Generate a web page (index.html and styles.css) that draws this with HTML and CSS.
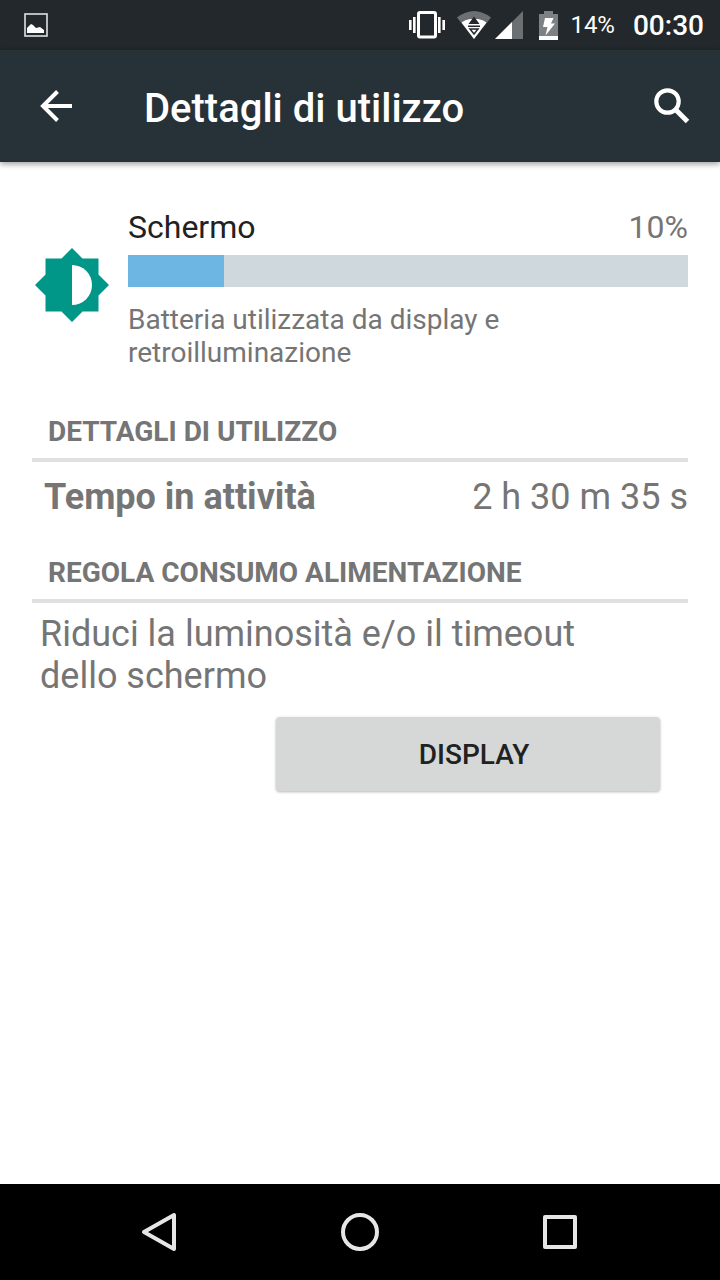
FILE: index.html
```html
<!DOCTYPE html>
<html lang="it">
  <head>
    <meta charset="UTF-8" />
    <meta name="viewport" content="width=device-width, initial-scale=1.0" />
    <title>Dettagli di utilizzo</title>
    <link rel="stylesheet" href="styles.css" />
  </head>
  <body>
    <div class="status">
      <svg class="status__picture" width="24" height="24" viewBox="0 0 24 24">
        <rect x="1" y="1" width="22" height="22" fill="none" stroke="#dce3e1" stroke-width="1.6" />
        <path d="M3 20v-5l4-4 2 1 3 3 4-1 4 3v3z" fill="#fff" />
      </svg>
      <svg class="status__vibrate" width="36" height="28" viewBox="0 0 36 28" fill="#fff">
        <rect x="9.5" y="1.5" width="17" height="24.5" rx="1.5" fill="none" stroke="#fff" stroke-width="3" />
        <path d="M0 9h2.6v10H0zM4 6h2.6v16H4zM29 6h2.6v16H29zM33.4 9H36v10h-2.6z" />
      </svg>
      <svg class="status__wifi" width="34" height="28" viewBox="0 0 34 28">
        <path d="M17 28L0 6.5Q17-6.500 34 6.5z" fill="#6c7072" />
        <path d="M17 28L4.500 11.500Q8 8.500 13 8h8Q26 8.500 29.500 11.500z" fill="#fff" />
        <path d="M17 5.500l5.500 7.500h-11z" fill="#22282b" />
        <path d="M11 15.200h12M13 18h8l-4 5z" fill="none" stroke="#22282b" stroke-width="1.500" />
      </svg>
      <svg class="status__signal" width="28" height="28" viewBox="0 0 28 28">
        <path d="M28 0v28H0z" fill="#6c7072" />
        <path d="M17 11v17H0z" fill="#fff" />
      </svg>
      <svg class="status__battery" width="19" height="29" viewBox="0 0 19 29">
        <path d="M5 0h9v3h5v26H0V3h5z" fill="#7d8183" />
        <path d="M0 25h19v4H0z" fill="#fff" />
        <path d="M6 7h8.500l-2.500 5.500h4L6.500 24.500 8.500 16H4z" fill="#fff" />
      </svg>
      <span class="status__percent">14%</span>
      <time class="status__time">00:30</time>
    </div>

    <header class="header">
      <button class="header__button" type="button" aria-label="Indietro">
        <svg width="32" height="32" viewBox="0 0 32 32" fill="none" stroke="#fff" stroke-width="4">
          <path d="M32 16H3M17.500 1.500L3 16l14.500 14.500" />
        </svg>
      </button>
      <h1 class="header__title">Dettagli di utilizzo</h1>
      <button class="header__button" type="button" aria-label="Cerca">
        <svg width="36" height="36" viewBox="0 0 36 36" fill="none" stroke="#fff">
          <circle cx="13.500" cy="13.500" r="11.200" stroke-width="4.200" />
          <path d="M22 22l11.500 11.500" stroke-width="5" />
        </svg>
      </button>
    </header>

    <main class="main">
      <section class="usage">
        <svg class="usage__icon" width="80" height="80" viewBox="0 0 80 80">
          <path d="M40 3l10.500 10.500H66.500V29.500L77 40 66.500 50.500V66.500H50.500L40 77 29.500 66.500H13.500V50.500L3 40l10.500-10.500V13.500H29.500z" fill="#009688" />
          <path d="M40 20a20 20 0 0 1 0 40z" fill="#fff" />
        </svg>
        <div class="usage__body">
          <div class="usage__row">
            <span class="usage__name">Schermo</span>
            <span class="usage__value">10%</span>
          </div>
          <div class="usage__bar">
            <div class="usage__fill"></div>
          </div>
          <p class="usage__text">Batteria utilizzata da display e retroilluminazione</p>
        </div>
      </section>

      <section class="block">
        <h2 class="block__title">DETTAGLI DI UTILIZZO</h2>
        <div class="block__row">
          <b>Tempo in attività</b>
          <span>2 h 30 m 35 s</span>
        </div>
      </section>

      <section class="block">
        <h2 class="block__title">REGOLA CONSUMO ALIMENTAZIONE</h2>
        <p class="block__text">Riduci la luminosità e/o il timeout dello schermo</p>
        <div class="block__actions">
          <button class="block__button" type="button">DISPLAY</button>
        </div>
      </section>
    </main>

    <nav class="nav">
      <button class="nav__button" type="button" aria-label="Indietro">
        <svg width="40" height="40" viewBox="0 0 40 40" fill="none" stroke="#e6e6e6" stroke-width="4" stroke-linejoin="round">
          <path d="M34 3v34L4 20z" />
        </svg>
      </button>
      <button class="nav__button" type="button" aria-label="Home">
        <svg width="40" height="40" viewBox="0 0 40 40" fill="none" stroke="#e6e6e6" stroke-width="4">
          <circle cx="20" cy="20" r="17" />
        </svg>
      </button>
      <button class="nav__button" type="button" aria-label="App recenti">
        <svg width="40" height="40" viewBox="0 0 40 40" fill="none" stroke="#e6e6e6" stroke-width="4" stroke-linejoin="round">
          <path d="M5 5h30v30H5z" />
        </svg>
      </button>
    </nav>
  </body>
</html>
```
FILE: styles.css
```css
* {
  box-sizing: border-box;
}
body {
  margin: 0;
  min-height: 100vh;
  display: flex;
  flex-direction: column;
  font-family: Roboto, sans-serif;
  color: #757575;
  background-color: #fff;
}
h1,
h2,
p {
  margin: 0;
}
svg {
  display: block;
  flex-shrink: 0;
}
button {
  font-family: inherit;
  border: none;
  cursor: pointer;
}

.status {
  display: flex;
  align-items: center;
  height: 50px;
  padding: 0 16px 0 24px;
  color: #fff;
  background-color: #22282b;
}
.status__vibrate {
  margin-left: auto;
}
.status__wifi {
  margin-left: 12px;
}
.status__signal {
  margin-left: 4px;
}
.status__battery {
  margin-left: 16px;
}
.status__percent {
  margin-left: 12px;
  font-size: 24px;
}
.status__time {
  margin-left: 18px;
  font-size: 28px;
  font-weight: 500;
}

.header {
  position: relative;
  display: flex;
  align-items: center;
  height: 112px;
  padding: 0 8px 0 16px;
  color: #fff;
  background-color: #263238;
  box-shadow: 0 2px 6px rgba(0, 0, 0, 0.4);
}
.header__button {
  display: flex;
  justify-content: center;
  align-items: center;
  width: 80px;
  height: 80px;
  padding: 0;
  background: none;
}
.header__title {
  flex: 1;
  padding: 4px 0 0 48px;
  font-size: 40px;
  font-weight: 500;
}

.main {
  flex: 1;
  padding: 45px 32px 32px;
}
.usage {
  display: flex;
  align-items: center;
  gap: 16px;
  margin-bottom: 8px;
}
.usage__icon {
  margin-bottom: 6px;
}
.usage__body {
  flex: 1;
}
.usage__row {
  display: flex;
  justify-content: space-between;
  font-size: 32px;
  line-height: 40px;
}
.usage__name {
  color: #212121;
}
.usage__bar {
  height: 32px;
  margin: 8px 0 16px;
  background-color: #cfd8dc;
}
.usage__fill {
  width: 96px;
  height: 100%;
  background-color: #6db5e3;
}
.usage__text {
  max-width: 400px;
  font-size: 28px;
  line-height: 33px;
}

.block__title {
  padding: 36px 16px 7px;
  font-size: 28px;
  font-weight: 700;
  line-height: 38px;
  border-bottom: 4px solid #e0e0e0;
}
.block__row {
  display: flex;
  justify-content: space-between;
  padding: 14px 0 0 12px;
  font-size: 36px;
  line-height: 42px;
}
.block__text {
  max-width: 600px;
  padding: 10px 8px 0;
  font-size: 36px;
  line-height: 42px;
}
.block__actions {
  display: flex;
  justify-content: flex-end;
  padding: 20px 28px 0 0;
}
.block__button {
  width: 384px;
  height: 74px;
  padding: 0 0 0 12px;
  font-size: 28px;
  font-weight: 500;
  color: #212121;
  background-color: #d6d8d7;
  border-radius: 4px;
  box-shadow: 0 1px 3px rgba(0, 0, 0, 0.3);
}

.nav {
  display: flex;
  justify-content: center;
  height: 96px;
  background-color: #000;
}
.nav__button {
  display: flex;
  justify-content: center;
  align-items: center;
  width: 200px;
  padding: 0;
  background: none;
}
```
